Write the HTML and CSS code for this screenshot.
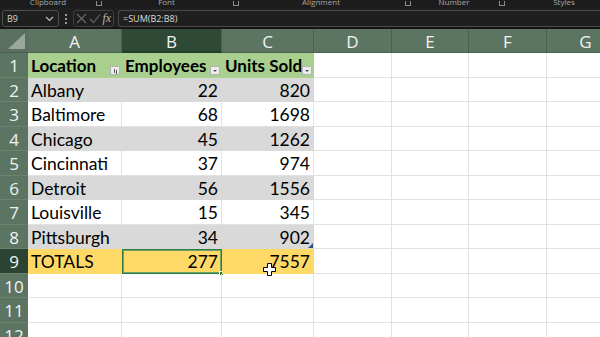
FILE: index.html
```html
<!DOCTYPE html>
<html lang="en">
<head>
    <meta charset="UTF-8">
    <title>Sheet - Totals</title>
    <link rel="stylesheet" href="styles.css">
</head>
<body>
    <div class="ribbon-labels">
        <div class="group" style="width:104px"><span class="grp" style="width:96px">Clipboard</span><span class="launch"></span></div>
        <div class="group" style="width:137px"><span class="grp" style="width:125px">Font</span><span class="launch" style="margin-left:4px"></span></div>
        <div class="group" style="width:170px"><span class="grp" style="width:160px">Alignment</span><span class="launch" style="margin-left:4px"></span></div>
        <div class="group" style="width:95px"><span class="grp" style="width:86px">Number</span><span class="launch" style="margin-left:2px"></span></div>
        <div class="group"><span class="grp" style="width:116px">Styles</span></div>
    </div>

    <div class="formula-bar">
        <div class="name-box">
            <span>B9</span>
            <svg width="9" height="6" viewBox="0 0 9 6"><path d="M1 1l3.5 3.5L8 1" fill="none" stroke="#bdbdbd" stroke-width="1.2"/></svg>
        </div>
        <div class="dots"><i></i><i></i><i></i></div>
        <div class="fx-box">
            <svg width="11" height="11" viewBox="0 0 11 11"><path d="M1 1l9 9M10 1l-9 9" stroke="#6a6a6a" stroke-width="1.1"/></svg>
            <svg width="12" height="11" viewBox="0 0 12 11"><path d="M1 6l3.5 3.5L11 1.5" fill="none" stroke="#6a6a6a" stroke-width="1.1"/></svg>
            <span class="fx">fx</span>
        </div>
        <div class="formula">=SUM(B2:B8)</div>
    </div>
    <div class="divider"></div>

    <div class="sheet">
        <div class="corner"></div>
        <div class="col-head">A</div>
        <div class="col-head active">B</div>
        <div class="col-head">C</div>
        <div class="col-head">D</div>
        <div class="col-head">E</div>
        <div class="col-head">F</div>
        <div class="col-head">G</div>

        <div class="row-head">1</div>
        <div class="cell th">Location<span class="filter sort"></span></div>
        <div class="cell th">Employees<span class="filter"></span></div>
        <div class="cell th">Units Sold<span class="filter"></span></div>
        <div class="cell"></div><div class="cell"></div><div class="cell"></div><div class="cell"></div>

        <div class="row-head">2</div>
        <div class="cell band">Albany</div>
        <div class="cell band num">22</div>
        <div class="cell band num">820</div>
        <div class="cell"></div><div class="cell"></div><div class="cell"></div><div class="cell"></div>

        <div class="row-head">3</div>
        <div class="cell">Baltimore</div>
        <div class="cell num">68</div>
        <div class="cell num">1698</div>
        <div class="cell"></div><div class="cell"></div><div class="cell"></div><div class="cell"></div>

        <div class="row-head">4</div>
        <div class="cell band">Chicago</div>
        <div class="cell band num">45</div>
        <div class="cell band num">1262</div>
        <div class="cell"></div><div class="cell"></div><div class="cell"></div><div class="cell"></div>

        <div class="row-head">5</div>
        <div class="cell">Cincinnati</div>
        <div class="cell num">37</div>
        <div class="cell num">974</div>
        <div class="cell"></div><div class="cell"></div><div class="cell"></div><div class="cell"></div>

        <div class="row-head">6</div>
        <div class="cell band">Detroit</div>
        <div class="cell band num">56</div>
        <div class="cell band num">1556</div>
        <div class="cell"></div><div class="cell"></div><div class="cell"></div><div class="cell"></div>

        <div class="row-head">7</div>
        <div class="cell">Louisville</div>
        <div class="cell num">15</div>
        <div class="cell num">345</div>
        <div class="cell"></div><div class="cell"></div><div class="cell"></div><div class="cell"></div>

        <div class="row-head">8</div>
        <div class="cell band">Pittsburgh</div>
        <div class="cell band num">34</div>
        <div class="cell band num">902<span class="resize"></span></div>
        <div class="cell"></div><div class="cell"></div><div class="cell"></div><div class="cell"></div>

        <div class="row-head active">9</div>
        <div class="cell total">TOTALS</div>
        <div class="cell total num selected">277<span class="handle"></span></div>
        <div class="cell total num">7557
            <svg class="cursor" width="13" height="13" viewBox="0 0 13 13"><path d="M4.5 0.5h4v4h4v4h-4v4h-4v-4h-4v-4h4z" fill="#fff" stroke="#000" stroke-width="1"/></svg>
        </div>
        <div class="cell"></div><div class="cell"></div><div class="cell"></div><div class="cell"></div>

        <div class="row-head">10</div>
        <div class="cell"></div><div class="cell"></div><div class="cell"></div>
        <div class="cell"></div><div class="cell"></div><div class="cell"></div><div class="cell"></div>

        <div class="row-head">11</div>
        <div class="cell"></div><div class="cell"></div><div class="cell"></div>
        <div class="cell"></div><div class="cell"></div><div class="cell"></div><div class="cell"></div>

        <div class="row-head">12</div>
        <div class="cell"></div><div class="cell"></div><div class="cell"></div>
        <div class="cell"></div><div class="cell"></div><div class="cell"></div><div class="cell"></div>
    </div>
</body>
</html>
```

FILE: styles.css
```css
* {
    margin: 0;
    padding: 0;
    box-sizing: border-box;
}

body {
    width: 600px;
    height: 337px;
    overflow: hidden;
    background: #ffffff;
    font-family: Lato, "Open Sans", sans-serif;
}

/* ribbon group captions, cut off at the top */
.ribbon-labels {
    height: 8px;
    background: #1c1c1c;
    display: flex;
    align-items: flex-end;
    overflow: hidden;
    color: #a8a8a8;
    font-family: "Open Sans", sans-serif;
    font-size: 8px;
    line-height: 10px;
}

.group {
    display: flex;
    align-items: flex-end;
    flex: none;
}

.grp {
    display: block;
    text-align: center;
    margin-bottom: 1px;
    flex: none;
}

.launch {
    width: 6px;
    height: 5px;
    margin-bottom: 2px;
    border: 1px solid #8a8a8a;
    border-top: none;
    flex: none;
}

.formula-bar {
    height: 19px;
    background: #1f1f1f;
    display: flex;
    align-items: center;
    padding: 2px 0 0 2px;
    font-family: "Open Sans", sans-serif;
    color: #d6d6d6;
}

.name-box {
    width: 57px;
    height: 17px;
    border: 1px solid #4d4d4d;
    border-radius: 3px;
    display: flex;
    align-items: center;
    justify-content: space-between;
    padding: 0 4px 0 4px;
    font-size: 9px;
}

.dots {
    width: 14px;
    display: flex;
    flex-direction: column;
    align-items: center;
    gap: 2px;
}

.dots i {
    width: 2px;
    height: 2px;
    background: #9a9a9a;
}

.fx-box {
    width: 41px;
    height: 17px;
    border: 1px solid #3e3e3e;
    border-radius: 3px;
    display: flex;
    align-items: center;
    justify-content: space-around;
    padding: 0 1px;
}

.fx {
    font-family: "Liberation Serif", serif;
    font-style: italic;
    font-size: 12px;
    color: #b8b8b8;
}

.formula {
    flex: 1;
    height: 17px;
    margin-left: 4px;
    border: 1px solid #4a4a4a;
    border-right: none;
    border-radius: 3px 0 0 3px;
    padding: 0 4px;
    font-size: 9px;
    line-height: 15px;
    color: #dcdcdc;
}

.divider {
    height: 2px;
    background: #151515;
}

/* grid */
.sheet {
    display: grid;
    grid-template-columns: 28px 94px 100px 92px 78px 77px 78px 78px;
    grid-template-rows: 24px;
    grid-auto-rows: 24.5px;
}

.corner {
    background: #5a6f5f;
    border-bottom: 1px solid #4a5d4e;
    position: relative;
}

.corner::after {
    content: "";
    position: absolute;
    right: 3px;
    bottom: 3px;
    border-left: 17px solid transparent;
    border-bottom: 16px solid #9aa79c;
}

.col-head {
    background: #5b7562;
    border-right: 1px solid #4b6251;
    border-bottom: 1px solid #4b6251;
    color: #f2f2f2;
    font-family: "Open Sans", sans-serif;
    font-size: 17px;
    line-height: 25px;
    text-align: center;
}

.col-head.active {
    background: #2e4a36;
    border-bottom: 2px solid #24402d;
}

.row-head {
    background: #5b7562;
    border-bottom: 1px solid #6c8371;
    color: #f2f2f2;
    font-family: "Open Sans", sans-serif;
    font-size: 17px;
    line-height: 25px;
    text-align: center;
}

.row-head.active {
    background: #2b4332;
}

.cell {
    position: relative;
    border-right: 1px solid #e1e1e1;
    border-bottom: 1px solid #e1e1e1;
    font-size: 17.5px;
    line-height: 24px;
    padding: 1px 3px 0;
    color: #000;
    white-space: nowrap;
}

.num {
    text-align: right;
    padding-right: 3px;
}

.th {
    background: #a9d08e;
    font-weight: bold;
    font-size: 17px;
    border-right-color: #a9d08e;
    border-bottom-color: #a9d08e;
}

.band {
    background: #d9d9d9;
    border-right-color: #d9d9d9;
    border-bottom-color: #d9d9d9;
}

.total {
    background: #ffd966;
    border-right-color: #ffd966;
    border-bottom-color: #ffd966;
}

.selected {
    border: 1px solid #2f7a43;
    box-shadow: inset 0 0 0 1px #6aa46c;
    padding-top: 0;
}

.handle {
    position: absolute;
    right: -3px;
    bottom: -3px;
    width: 5px;
    height: 5px;
    background: #217346;
    border: 1px solid #fff;
}

.filter {
    position: absolute;
    right: 1px;
    bottom: 2px;
    width: 10px;
    height: 9px;
    background: #ececec;
    border: 1px solid #b4b4b4;
}

.filter::after {
    content: "";
    position: absolute;
    left: 2px;
    top: 3px;
    border-left: 2px solid transparent;
    border-right: 2px solid transparent;
    border-top: 2px solid #555;
}

.filter.sort::after {
    left: 3px;
    top: 2px;
    border: none;
    width: 1px;
    height: 4px;
    background: #555;
    box-shadow: 2px 1px 0 #555;
}

.resize {
    position: absolute;
    right: 0;
    bottom: 0;
    border-left: 5px solid transparent;
    border-bottom: 5px solid #2f4f8f;
}

.cursor {
    position: absolute;
    left: 41px;
    top: 14px;
}
```
